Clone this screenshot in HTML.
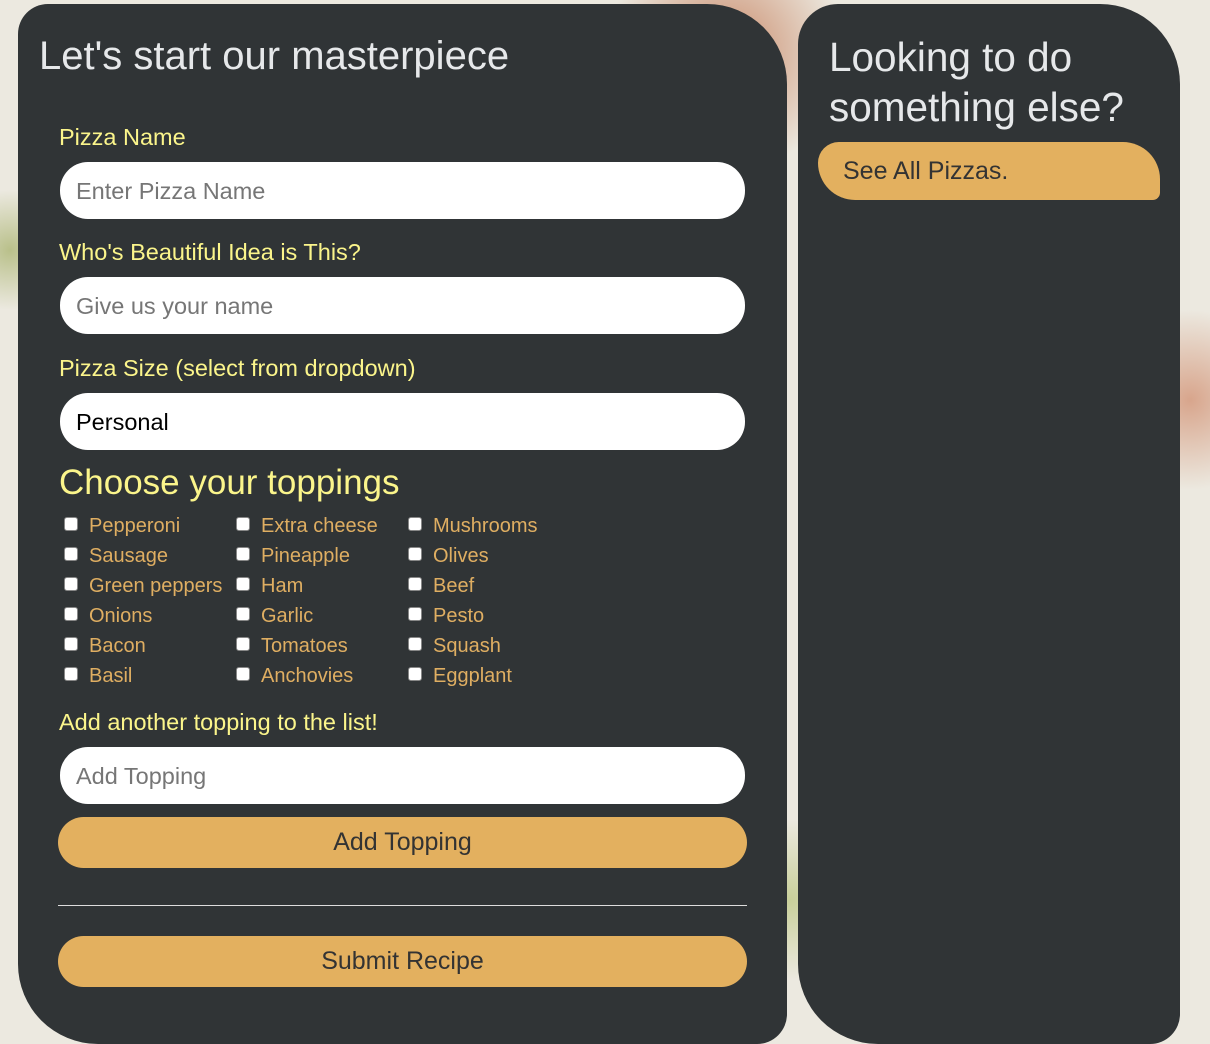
<!DOCTYPE html>
<html><head><meta charset="utf-8"><style>
*{box-sizing:border-box;margin:0;padding:0}
body{width:1210px;height:1044px;overflow:hidden;font-family:"Liberation Sans",sans-serif;position:relative;
background:radial-gradient(circle at 60% 5%,#c98a6a 0,rgba(220,170,140,0) 120px),radial-gradient(circle at 1190px 400px,#d8a58c 0,rgba(255,255,255,0) 90px),radial-gradient(circle at 10px 250px,#b9c08a 0,rgba(255,255,255,0) 60px),radial-gradient(circle at 790px 900px,#c8cf9a 0,rgba(255,255,255,0) 80px),#ece9e0}
.p{position:absolute;background:#303436}
.l{left:18px;top:4px;width:769px;height:1040px;border-radius:30px 80px 30px 80px}
.r{left:798px;top:4px;width:382px;height:1040px;border-radius:40px 80px 30px 80px}
.a{position:absolute}
h1{position:absolute;color:#e6e8ea;font-weight:normal;font-size:40px}
.lab{position:absolute;left:59px;color:#fbf58b;font-size:23.5px}
.in{position:absolute;left:60px;width:685px;height:57px;background:#fff;border-radius:28px;font-size:23.5px;color:#767676;padding:16px 0 0 16px}
.btn{position:absolute;left:58px;width:689px;height:51px;background:#e3b05f;border-radius:26px;color:#333;font-size:25px;text-align:center;line-height:51px}
.t{position:absolute;color:#dfae62;font-size:20px}
.cb{position:absolute;width:14px;height:14px;background:#fff;border-radius:3px;border:1px solid #888}
</style></head><body>
<div class="p l"></div>
<div class="p r"></div>
<h1 style="left:39px;top:34px">Let's start our masterpiece</h1>
<div class="lab" style="top:124px">Pizza Name</div>
<div class="in" style="top:162px">Enter Pizza Name</div>
<div class="lab" style="top:239px">Who's Beautiful Idea is This?</div>
<div class="in" style="top:277px">Give us your name</div>
<div class="lab" style="top:355px">Pizza Size (select from dropdown)</div>
<div class="in" style="top:393px;color:#000">Personal</div>
<div class="lab" style="top:463px;font-size:35px">Choose your toppings</div>
<div class="cb" style="left:64px;top:517px"></div><div class="t" style="left:89px;top:515px">Pepperoni</div>
<div class="cb" style="left:64px;top:547px"></div><div class="t" style="left:89px;top:545px">Sausage</div>
<div class="cb" style="left:64px;top:577px"></div><div class="t" style="left:89px;top:575px">Green peppers</div>
<div class="cb" style="left:64px;top:607px"></div><div class="t" style="left:89px;top:605px">Onions</div>
<div class="cb" style="left:64px;top:637px"></div><div class="t" style="left:89px;top:635px">Bacon</div>
<div class="cb" style="left:64px;top:667px"></div><div class="t" style="left:89px;top:665px">Basil</div>
<div class="cb" style="left:236px;top:517px"></div><div class="t" style="left:261px;top:515px">Extra cheese</div>
<div class="cb" style="left:236px;top:547px"></div><div class="t" style="left:261px;top:545px">Pineapple</div>
<div class="cb" style="left:236px;top:577px"></div><div class="t" style="left:261px;top:575px">Ham</div>
<div class="cb" style="left:236px;top:607px"></div><div class="t" style="left:261px;top:605px">Garlic</div>
<div class="cb" style="left:236px;top:637px"></div><div class="t" style="left:261px;top:635px">Tomatoes</div>
<div class="cb" style="left:236px;top:667px"></div><div class="t" style="left:261px;top:665px">Anchovies</div>
<div class="cb" style="left:408px;top:517px"></div><div class="t" style="left:433px;top:515px">Mushrooms</div>
<div class="cb" style="left:408px;top:547px"></div><div class="t" style="left:433px;top:545px">Olives</div>
<div class="cb" style="left:408px;top:577px"></div><div class="t" style="left:433px;top:575px">Beef</div>
<div class="cb" style="left:408px;top:607px"></div><div class="t" style="left:433px;top:605px">Pesto</div>
<div class="cb" style="left:408px;top:637px"></div><div class="t" style="left:433px;top:635px">Squash</div>
<div class="cb" style="left:408px;top:667px"></div><div class="t" style="left:433px;top:665px">Eggplant</div>
<div class="lab" style="top:709px">Add another topping to the list!</div>
<div class="in" style="top:747px">Add Topping</div>
<div class="btn" style="top:817px">Add Topping</div>
<div class="a" style="left:58px;top:905px;width:689px;height:1px;background:#ddd"></div>
<div class="btn" style="top:936px">Submit Recipe</div>
<h1 style="left:829px;top:32px;line-height:50px;font-size:40.5px">Looking to do<br>something else?</h1>
<div class="a" style="left:818px;top:142px;width:342px;height:58px;background:#e3b05f;border-radius:28px 50px 10px 50px;color:#333;font-size:25px;padding:15px 0 0 25px">See All Pizzas.</div>
</body></html>
